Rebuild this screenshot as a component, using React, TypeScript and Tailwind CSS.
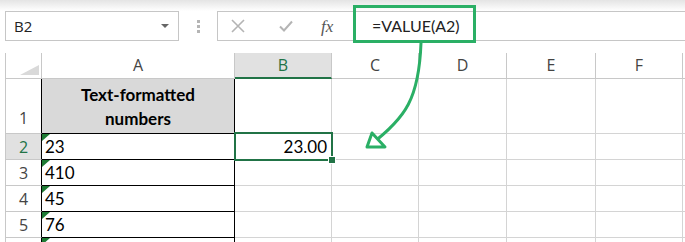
import React from "react";

const hdr = "font-['Open_Sans',sans-serif] text-[16px] text-[#444]";
const cellFont = "font-[Lato,sans-serif] text-[17px] text-black";

function Tri() {
  return (
    <svg className="absolute left-0 top-0" width="8" height="7" viewBox="0 0 8 7">
      <polygon points="0,0 8,0 0,7" fill="#1e7b34" />
    </svg>
  );
}

export default function App() {
  const colHeads = ["C", "D", "E", "F"];
  const dataRows = [
    { n: "2", a: "23", b: "23.00" },
    { n: "3", a: "410", b: "" },
    { n: "4", a: "45", b: "" },
    { n: "5", a: "76", b: "" },
    { n: "", a: "", b: "" },
  ];
  return (
    <div className="relative w-[685px] h-[242px] overflow-hidden bg-white">
      <div className="h-[11px] bg-gradient-to-b from-[#e4e4e4] to-white" />
      {/* formula bar */}
      <div className="flex h-[30px] items-stretch">
        <div className="ml-[5px] w-[174px] border border-[#c6c6c6] flex items-center justify-between pl-[8px] pr-[9px]">
          <span className="font-['Open_Sans',sans-serif] text-[15px] text-[#222]">B2</span>
          <svg width="8" height="4" viewBox="0 0 8 4"><polygon points="0,0 8,0 4,4" fill="#666" /></svg>
        </div>
        <div className="w-[38px] flex flex-col items-center justify-center gap-[2px]">
          <div className="w-[3px] h-[3px] bg-[#b5b5b5]" />
          <div className="w-[3px] h-[3px] bg-[#b5b5b5]" />
          <div className="w-[3px] h-[3px] bg-[#b5b5b5]" />
        </div>
        <div className="flex-1 flex items-center border-y border-l border-[#c6c6c6]">
          <div className="w-[136px] flex items-center">
            <svg className="ml-[13px]" width="14" height="14" viewBox="0 0 14 14">
              <path d="M1 1 L13 13 M13 1 L1 13" stroke="#b4b4b4" strokeWidth="1.6" />
            </svg>
            <svg className="ml-[34px]" width="14" height="12" viewBox="0 0 14 12">
              <path d="M1 6.5 L5 10.5 L13 1.5" stroke="#b4b4b4" strokeWidth="2" fill="none" />
            </svg>
            <span className="ml-[28px] font-['Liberation_Serif',serif] italic text-[17px] text-[#555] leading-none">fx</span>
          </div>
          <span className="ml-[18px] font-[Lato,sans-serif] text-[16px] text-[#222]">=VALUE(A2)</span>
        </div>
      </div>
      <div className="h-[12px]" />
      {/* grid */}
      <div className="relative ml-[5px] grid grid-cols-[37px_193px_97px_87px_88px_89px_87px_1fr] grid-rows-[26px_55px_26px_26px_26px_26px_26px]">
        {/* header row */}
        <div className="relative border-l border-r border-b border-[#c8c8c8]">
          <svg className="absolute right-[2px] bottom-[3px]" width="19" height="10" viewBox="0 0 19 10">
            <polygon points="19,0 19,10 0,10" fill="#d9d9d9" />
          </svg>
        </div>
        <div className={`border-r border-b border-[#c8c8c8] flex items-end justify-center pb-[1px] ${hdr}`}>A</div>
        <div className={`border-r border-[#c8c8c8] border-b-2 border-b-[#217346] bg-[#e1e1e1] flex items-end justify-center pb-[0px] font-['Open_Sans',sans-serif] text-[16px] text-[#217346]`}>B</div>
        {colHeads.map((c) => (
          <div key={c} className={`border-r border-b border-[#c8c8c8] flex items-end justify-center pb-[1px] ${hdr}`}>{c}</div>
        ))}
        <div className="border-b border-[#c8c8c8]" />

        {/* row 1 */}
        <div className={`border-l border-[#c8c8c8] border-r border-r-black border-b border-b-[#c8c8c8] flex items-end justify-center pb-[3px] ${hdr}`}>1</div>
        <div className={`bg-[#d9d9d9] border-r border-b border-black flex flex-col items-center justify-end pb-[2px] leading-[24px] font-bold ${cellFont}`}>
          <span>Text-formatted</span>
          <span>numbers</span>
        </div>
        <div className="border-r border-b border-[#d4d4d4] border-b-black" />
        {colHeads.map((c) => (
          <div key={c} className="border-r border-b border-[#d4d4d4]" />
        ))}
        <div className="border-b border-[#d4d4d4]" />

        {dataRows.map((r, i) => {
          const sel = r.n === "2";
          return (
            <React.Fragment key={i}>
              <div
                className={`border-l border-[#c8c8c8] border-r border-r-black border-b border-b-[#c8c8c8] flex items-center justify-center ${
                  sel ? "bg-[#e1e1e1] font-['Open_Sans',sans-serif] text-[16px] text-[#217346]" : hdr
                }`}
              >
                {r.n}
              </div>
              <div className={`relative border-r border-b border-black flex items-center pl-[3px] ${cellFont}`}>
                <Tri />
                {r.a}
              </div>
              <div className={`border-r border-b border-[#d4d4d4] flex items-center justify-end pr-[4px] ${cellFont}`}>{r.b}</div>
              {colHeads.map((c) => (
                <div key={c} className="border-r border-b border-[#d4d4d4]" />
              ))}
              <div className="border-b border-[#d4d4d4]" />
            </React.Fragment>
          );
        })}

        {/* selection */}
        <div className="absolute left-[229px] top-[79px] w-[99px] h-[29px] border-2 border-[#217346]" />
        <div className="absolute left-[324px] top-[104px] w-[6px] h-[6px] bg-[#217346] outline outline-1 outline-white" />
      </div>

      {/* annotation */}
      <div className="absolute left-[353px] top-[5px] w-[123px] h-[38px] border-[3px] border-[#2aaf65]" />
      <svg className="absolute left-0 top-0" width="685" height="242" viewBox="0 0 685 242">
        <path d="M421 43 C419 98, 406 118, 370 145" stroke="#2aaf65" strokeWidth="3" fill="none" />
        <polygon points="367,147 372,133 385,147" stroke="#2aaf65" strokeWidth="3" fill="white" strokeLinejoin="round" />
      </svg>
    </div>
  );
}
